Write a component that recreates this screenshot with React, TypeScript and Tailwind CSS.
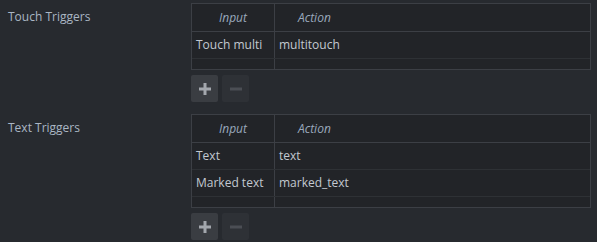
import React from 'react';

type Row = { input: string; action: string };

const font = { fontFamily: '"Open Sans", "Noto Sans", sans-serif' };

const PlusIcon = () => (
  <svg width="14" height="14" viewBox="0 0 14 14">
    <path d="M7 1v12M1 7h12" stroke="#a3a7ad" strokeWidth="3" />
  </svg>
);

const MinusIcon = () => (
  <svg width="14" height="14" viewBox="0 0 14 14">
    <path d="M1 7h12" stroke="#4b4e54" strokeWidth="3" />
  </svg>
);

const TriggerTable = ({ rows }: { rows: Row[] }) => (
  <div className="flex flex-col">
    <div className="border border-[#3c3f45] bg-[#222428]">
      <div className="flex h-[28px] border-b border-[#3c3f45]">
        <div className="w-[83px] border-r border-[#3c3f45] flex items-center justify-center italic text-[12px] text-[#9aa9bd]">
          Input
        </div>
        <div className="flex-1 flex items-center pl-[23px] italic text-[12px] text-[#9aa9bd]">Action</div>
      </div>
      {rows.map((r) => (
        <div key={r.input} className="flex h-[27px] border-b border-[#2e3135]">
          <div className="w-[83px] border-r border-[#3c3f45] flex items-center pl-[4px] text-[12px] text-[#c3c9d1]">
            {r.input}
          </div>
          <div className="flex-1 flex items-center pl-[4px] text-[12px] text-[#c3c9d1]">{r.action}</div>
        </div>
      ))}
      <div className="flex h-[10px]">
        <div className="w-[83px] border-r border-[#3c3f45]" />
      </div>
    </div>
    <div className="flex gap-[4px] mt-[5px]">
      <button className="w-[27px] h-[27px] rounded-[2px] bg-[#3a3d42] flex items-center justify-center">
        <PlusIcon />
      </button>
      <button className="w-[27px] h-[27px] rounded-[2px] bg-[#2e3136] flex items-center justify-center">
        <MinusIcon />
      </button>
    </div>
  </div>
);

const Section = ({ label, rows }: { label: string; rows: Row[] }) => (
  <div className="flex">
    <div className="w-[191px] pl-[8px] pt-[5px] text-[12px] text-[#aab6c4]">{label}</div>
    <div className="flex-1 mr-[6px]">
      <TriggerTable rows={rows} />
    </div>
  </div>
);

export default function App() {
  return (
    <div className="w-[597px] h-[242px] bg-[#272a2f] pt-[3px] flex flex-col gap-[12px] overflow-hidden" style={font}>
      <Section label="Touch Triggers" rows={[{ input: 'Touch multi', action: 'multitouch' }]} />
      <Section
        label="Text Triggers"
        rows={[
          { input: 'Text', action: 'text' },
          { input: 'Marked text', action: 'marked_text' },
        ]}
      />
    </div>
  );
}
